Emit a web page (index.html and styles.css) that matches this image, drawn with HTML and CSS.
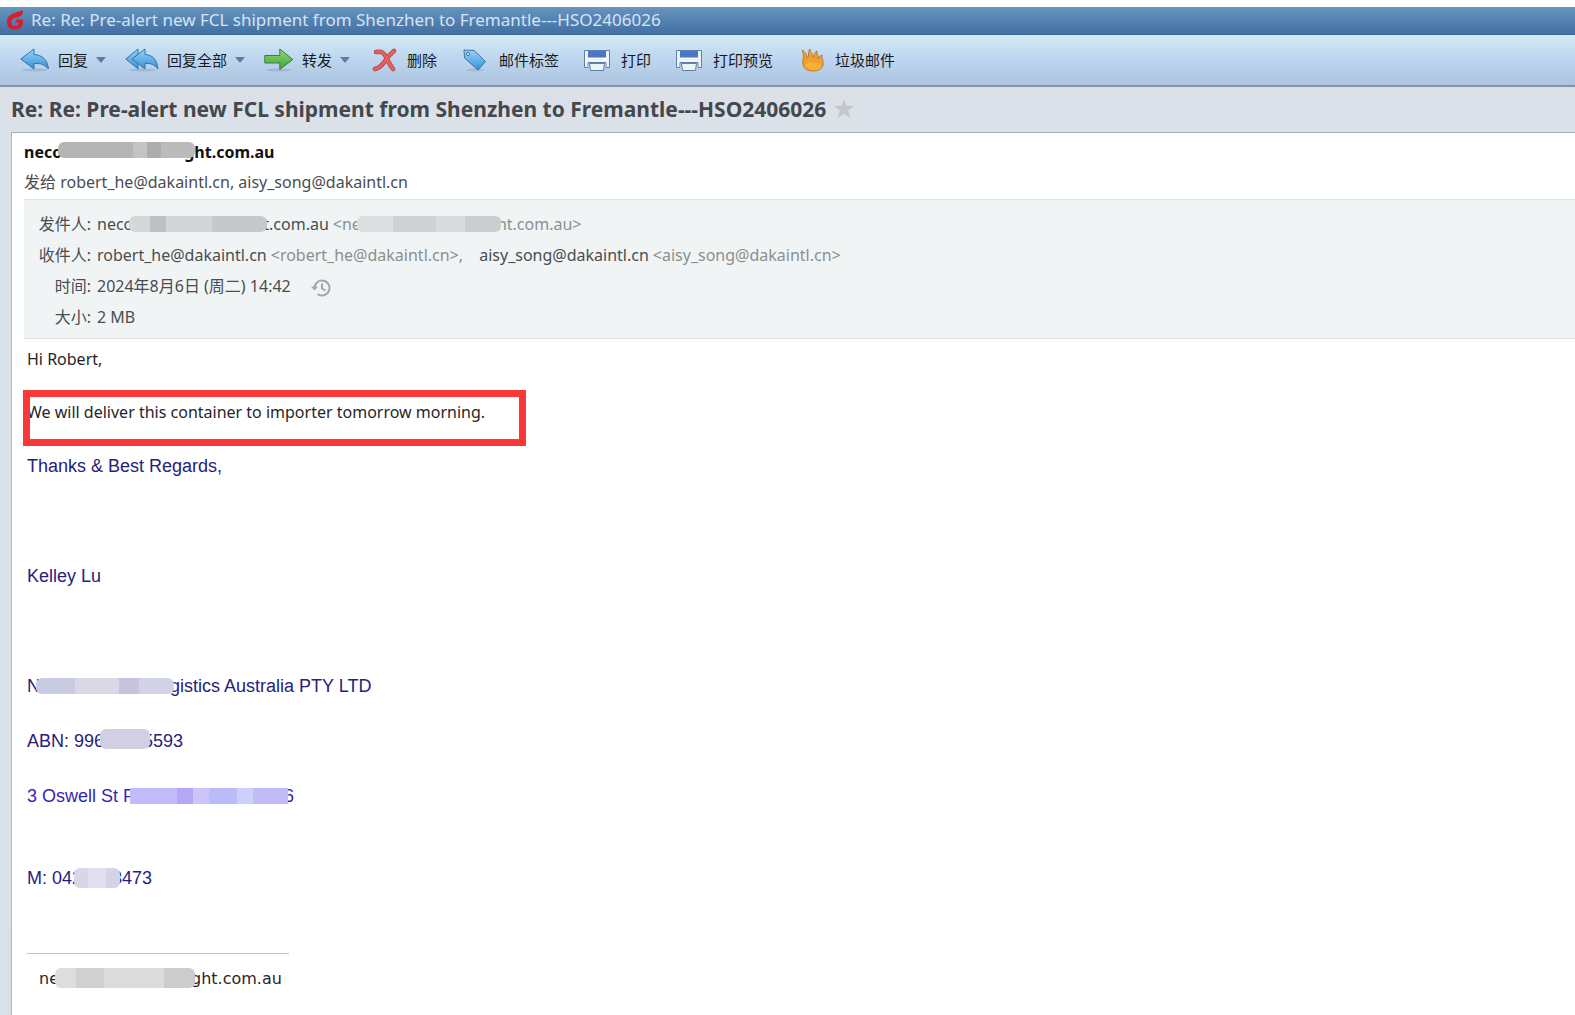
FILE: index.html
```html
<!DOCTYPE html>
<html lang="zh-CN">
<head>
<meta charset="utf-8">
<title>Re: Re: Pre-alert new FCL shipment from Shenzhen to Fremantle---HSO2406026</title>
<link rel="stylesheet" href="styles.css">
</head>
<body>
<svg class="defs" aria-hidden="true">
  <defs>
    <linearGradient id="blue" x1="0" y1="0" x2="0" y2="1"><stop offset="0" stop-color="#9ad4f8"/><stop offset="1" stop-color="#3590d6"/></linearGradient>
    <linearGradient id="green" x1="0" y1="0" x2="0" y2="1"><stop offset="0" stop-color="#93d873"/><stop offset="1" stop-color="#3fa13a"/></linearGradient>
    <symbol id="printer" viewBox="0 0 30 24">
      <path d="M1.500 2.500h25v17h-3.500v-5h-18v5h-3.500z" fill="#edf4fb" stroke="#5f7fa8"/>
      <path d="M5 3h18v6.500h-18z" fill="#4a76c4"/><path d="M5 10.500h18" stroke="#fff"/>
      <path d="M5.500 15.500h17v4.500h-17z" fill="#c2d3e6"/>
      <path d="M6.500 15.500h15l-1 7h-13z" fill="#eaf3f6" stroke="#5f7fa8"/>
    </symbol>
  </defs>
</svg>
<header class="titlebar">
  <svg class="logo" viewBox="0 0 18 20" aria-hidden="true"><path d="M17 .5C12 2 1 3 1 12c0 5 3 7.500 8 7.500 6 0 8.500-3 8-10H9.500v3h3c0 2-1 3.500-3.500 3.500S5.500 14.500 5.500 12c0-2 1-3.500 3.500-4 4-.6 8-2 8-7.500z" fill="#d3202c"/></svg>
  <span>Re: Re: Pre-alert new FCL shipment from Shenzhen to Fremantle---HSO2406026</span>
</header>
<nav class="toolbar">
  <button class="tool" type="button">
    <svg class="icon" viewBox="0 0 30 24" aria-hidden="true"><ellipse cx="15" cy="22" rx="13" ry="1.500" fill="#8fa9c6" opacity=".6"/><path d="M.8 11L14 1v5.500c8 .5 13.500 5 14.500 14.500-4-4.500-8-6-14.500-5.500v5.500z" fill="url(#blue)" stroke="#3572ad"/></svg>
    <span>回复</span><i class="caret"></i>
  </button>
  <button class="tool" type="button">
    <svg class="icon icon-wide" viewBox="0 0 34 24" aria-hidden="true"><ellipse cx="18" cy="22" rx="14" ry="1.500" fill="#8fa9c6" opacity=".6"/><path d="M.8 11L13 1v5l-5 5 5 5v5z" fill="url(#blue)" stroke="#3572ad"/><path d="M7 11L20 1v5.500c8 .5 12 5 13 14.500-4-4.500-7-6-13-5.500v5.500z" fill="url(#blue)" stroke="#3572ad"/></svg>
    <span>回复全部</span><i class="caret"></i>
  </button>
  <button class="tool" type="button">
    <svg class="icon" viewBox="0 0 30 24" aria-hidden="true"><ellipse cx="15" cy="22" rx="13" ry="1.500" fill="#8fa9c6" opacity=".6"/><path d="M.8 7.500h15v-6.500l13 10.500-13 10v-6.500h-15z" fill="url(#green)" stroke="#36813a"/></svg>
    <span>转发</span><i class="caret"></i>
  </button>
  <button class="tool plain" type="button">
    <svg class="icon" viewBox="0 0 30 24" aria-hidden="true"><g fill="none" stroke-linecap="round" stroke-linejoin="round"><path d="M7 4c6-1 8 1 10 5s4 8 7 12M25 3c-5 4-7 7-9 10s-5 7-10 8" stroke="#b23f44" stroke-width="4.500"/><path d="M7 4c6-1 8 1 10 5s4 8 7 12M25 3c-5 4-7 7-9 10s-5 7-10 8" stroke="#e5605f" stroke-width="3"/></g></svg>
    <span>删除</span>
  </button>
  <button class="tool plain" type="button">
    <svg class="icon" viewBox="0 0 30 24" aria-hidden="true"><ellipse cx="14" cy="22" rx="9" ry="1.500" fill="#8fa9c6" opacity=".5"/><path d="M3 2l10 .5L24.500 13.500l-7.500 8.500L3.500 10z" fill="url(#blue)" stroke="#39729f"/><circle cx="7" cy="6" r="1.600" fill="#e6f4ff" stroke="#39729f"/></svg>
    <span>邮件标签</span>
  </button>
  <button class="tool plain" type="button">
    <svg class="icon" viewBox="0 0 30 24" aria-hidden="true"><use href="#printer"/></svg>
    <span>打印</span>
  </button>
  <button class="tool plain" type="button">
    <svg class="icon" viewBox="0 0 30 24" aria-hidden="true"><use href="#printer"/></svg>
    <span>打印预览</span>
  </button>
  <button class="tool plain" type="button">
    <svg class="icon" viewBox="0 0 30 24" aria-hidden="true"><path d="M5 2c3 2 5 4 5 8C13 8 10 4 13 1c0 4 4 5 3 9 2-2 0-5 4-7-1 3 2 5 1 8 1-1 1-3 4-4-1 3 2 6 1 10-1 4-5 6-10 6S7 21 6 17C5 13 8 8 5 2z" fill="#f0a030" stroke="#b67a35"/><path d="M8 17c1-2 3-2 4-3 2 1 3 1 5 0 1 2 3 1 4 1 0 1 3 1 3 3-1 6-13 6-16-1z" fill="#f7b037"/></svg>
    <span>垃圾邮件</span>
  </button>
</nav>
<main class="mail">
  <div class="subject">
    <h1>Re: Re: Pre-alert new FCL shipment from Shenzhen to Fremantle---HSO2406026</h1>
    <svg class="star" viewBox="0 0 20 20" aria-hidden="true"><path d="M10 0l2.600 7H20l-6 4.600 2.300 7.600L10 14.700l-6.300 4.500L6 11.600 0 7h7.400z" fill="#c3c7cc"/></svg>
  </div>
  <article class="card">
    <div class="from">neco<span class="mosaic m-from"></span>ght.com.au</div>
    <div class="to">发给 robert_he@dakaintl.cn, aisy_song@dakaintl.cn</div>
    <dl class="details">
      <dt>发件人:</dt><dd>neco<span class="mosaic m-name"></span>t.com.au<span class="addr">&lt;ne<span class="mosaic m-addr"></span>ht.com.au&gt;</span></dd>
      <dt>收件人:</dt><dd>robert_he@dakaintl.cn<span class="addr">&lt;robert_he@dakaintl.cn&gt;,</span> <span class="second">aisy_song@dakaintl.cn</span><span class="addr">&lt;aisy_song@dakaintl.cn&gt;</span></dd>
      <dt>时间:</dt><dd>2024年8月6日 (周二) 14:42<svg class="clock" viewBox="0 0 20 18" aria-hidden="true"><path d="M3.500 9a7.500 7.500 0 1 1 3 6M11 4.500V9.500l3.500 2" fill="none" stroke="#a3a6a8" stroke-width="2"/><path d="M0 7.500h7l-3.500 4z" fill="#a3a6a8"/></svg></dd>
      <dt>大小:</dt><dd>2 MB</dd>
    </dl>
    <div class="body">
      <p>Hi Robert,</p>
      <p class="marked">We will deliver this container to importer tomorrow morning.</p>
      <div class="signature">
        <p>Thanks &amp; Best Regards,</p>
        <p>&nbsp;</p>
        <p>Kelley Lu</p>
        <p>&nbsp;</p>
        <p>N<span class="mosaic m-company"></span>gistics Australia PTY LTD</p>
        <p>ABN: 996<span class="mosaic m-abn"></span>5593</p>
        <p class="street">3 Oswell St F<span class="mosaic m-street"></span>6<br>&nbsp;</p>
        <p>M: 042<span class="mosaic m-phone"></span>3473</p>
      </div>
      <hr>
      <div class="sender">ne<span class="mosaic m-sender"></span>ght.com.au</div>
    </div>
  </article>
</main>
</body>
</html>
```
FILE: styles.css
```css
*, *::after { box-sizing: border-box; }
body {
  margin: 0;
  padding-top: 7px;
  min-height: 100vh;
  display: flex;
  flex-direction: column;
  background: #fff;
  color: #4a4d50;
  font: 16px/24px "Noto Sans", "Noto Sans CJK SC", sans-serif;
}
.defs { position: absolute; width: 0; height: 0; }
.titlebar {
  display: flex;
  align-items: center;
  gap: 7px;
  height: 28px;
  padding: 0 6px 2px;
  background: linear-gradient(#6695bf, #436fa3);
  border-bottom: 1px solid #406791;
  color: #d5e4f3;
  font-size: 17px;
  white-space: nowrap;
}
.logo { width: 18px; height: 20px; }
.toolbar {
  display: flex;
  align-items: center;
  gap: 19px;
  height: 52px;
  padding: 0 20px 1px;
  background: linear-gradient(#d2eaf7, #bdd5ee 50%, #abc4df);
  border-bottom: 2px solid #8394a8;
}
.tool {
  display: flex;
  align-items: center;
  gap: 8px;
  border: 0;
  padding: 0;
  background: none;
  color: #15191e;
  font: 15px/24px "Noto Sans CJK SC", sans-serif;
  white-space: nowrap;
}
.plain { padding-right: 5px; }
.icon { width: 30px; height: 24px; }
.icon-wide { width: 34px; }
.caret {
  border: 5px solid transparent;
  border-top: 6px solid #657b96;
  border-bottom: 0;
}
.mail {
  flex: 1;
  display: flex;
  flex-direction: column;
  padding-left: 11px;
  background: linear-gradient(#dce0e8, #dae2e9 44px, #d7e2e8);
}
.subject { display: flex; align-items: center; gap: 8px; height: 45px; padding-bottom: 1px; }
h1 { margin: 0; font-size: 21px; line-height: 28px; color: #44484d; white-space: nowrap; }
.star { width: 20px; height: 20px; }
.card {
  flex: 1;
  padding: 5px 0 0 12px;
  background: #fff;
  border-top: 1px solid #a9adb2;
  border-left: 1px solid #aeb8c4;
}
.from { color: #111; font-weight: 700; line-height: 28px; }
.to { line-height: 33px; }
.details {
  display: grid;
  grid-template-columns: 67px 1fr;
  column-gap: 6px;
  margin: 0;
  padding: 9px 0 5px;
  background: #f0f4f4;
  border-top: 1px solid #dfe2e2;
  border-bottom: 1px solid #dfe2e2;
  line-height: 31px;
}
dt { text-align: right; }
dd { margin: 0; }
.addr { margin-left: 4px; color: #8b8f91; }
.second { margin-left: 12px; }
.clock { width: 20px; height: 18px; margin-left: 20px; vertical-align: middle; }
.body { padding: 7px 0 0 3px; color: #26262a; line-height: 27px; }
p { margin: 0 0 26px; }
.marked { position: relative; }
.marked::after {
  content: "";
  position: absolute;
  left: -4px;
  top: -9px;
  width: 503px;
  height: 56px;
  border: 7px solid #fa3838;
}
.signature { padding-top: 1px; font: 18px/27px "Liberation Sans", Arial, sans-serif; color: #27217d; }
.signature p { margin-bottom: 28px; }
.street { color: #3425b5; }
hr { width: 262px; margin: 61px 0 0; border: 0; border-top: 1px solid #b9c8cf; }
.sender { padding: 11px 12px; color: #2a2527; font-family: "DejaVu Sans", "Noto Sans", sans-serif; }
.mosaic {
  display: inline-block;
  position: relative;
  z-index: 1;
  height: 16px;
  margin: 0 -4px;
  border-radius: 6px;
  vertical-align: -2px;
}
.m-from { width: 137px; margin-right: -11px; vertical-align: 0; background: linear-gradient(90deg, #b5b5b5 55%, #c4c4c4 55% 65%, #adadad 65% 75%, #bbb 75%); }
.m-name { width: 138px; background: linear-gradient(90deg, #d5d8d8 15%, #bec1c1 15% 27%, #d3d6d6 27% 60%, #c6c9c9 60%); }
.m-addr { width: 144px; background: linear-gradient(90deg, #dcdfdf 25%, #cfd2d2 25% 55%, #d8dbdb 55% 75%, #cbcece 75%); }
.m-company { width: 138px; background: linear-gradient(90deg, #c9cbe3 28%, #dad8e6 28% 60%, #c6c3dc 60% 75%, #d2d4e6 75%); }
.m-abn { width: 50px; height: 20px; margin-right: -7px; background: #d1cfe3; }
.m-street { width: 158px; border-radius: 0; background: linear-gradient(90deg, #c0bdfa 30%, #b3a8f5 30% 40%, #cfc4f8 40% 50%, #bcbbfa 50% 68%, #ced0fc 68% 78%, #bfbcf8 78%); }
.m-phone { width: 46px; height: 20px; margin: 0 -8px; vertical-align: -4px; background: linear-gradient(90deg, #d8d6e8 30%, #e2e0ef 30% 70%, #d6d3e6 70%); }
.m-sender { width: 140px; height: 20px; vertical-align: -4px; background: linear-gradient(90deg, #ddd 15%, #d0d0d0 15% 35%, #dcdcdc 35% 78%, #ccc 78%); }
```
